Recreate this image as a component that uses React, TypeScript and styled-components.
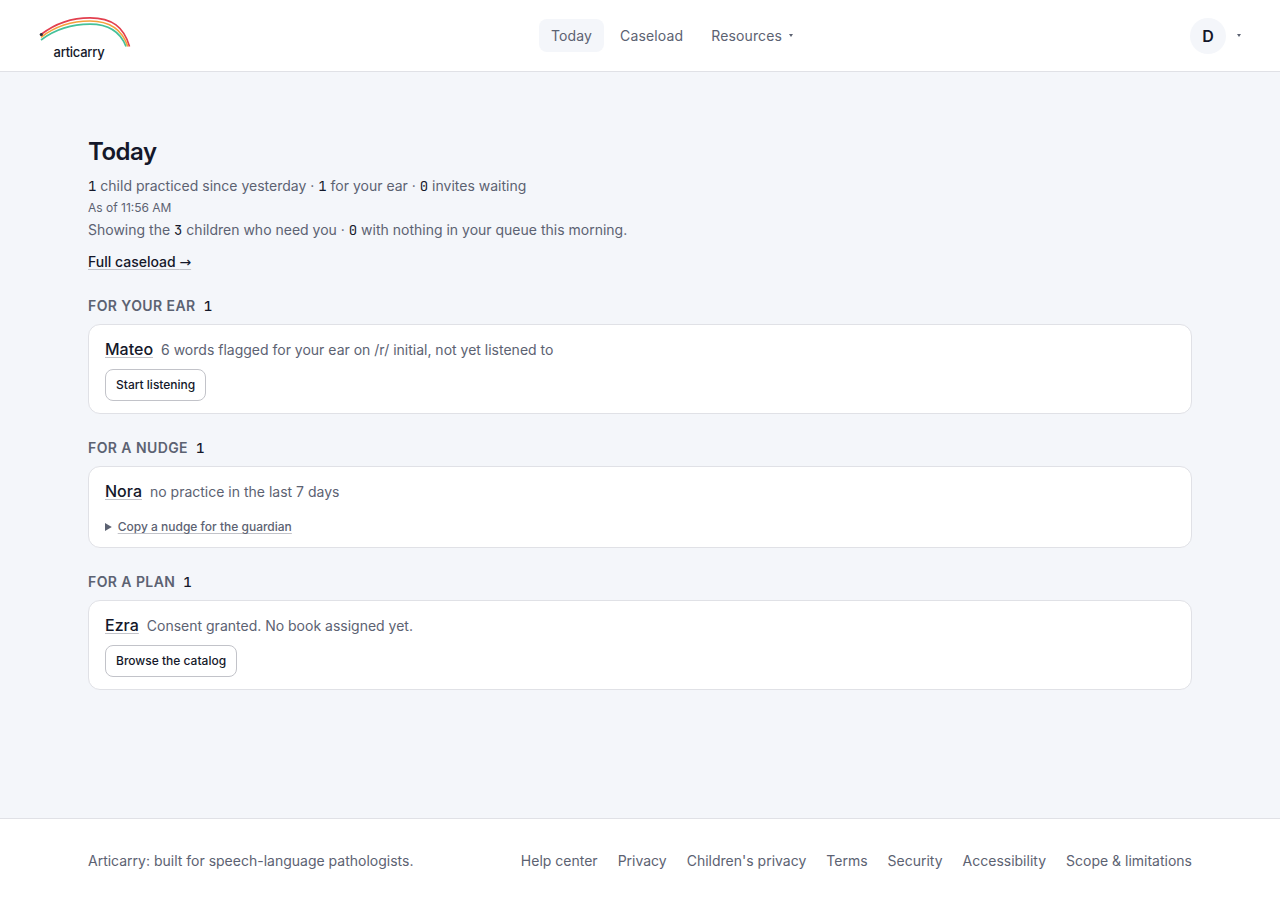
import React from "react";
import styled, { createGlobalStyle } from "styled-components";

const ink = "#14182a";
const muted = "#5c6272";
const line = "#e0e1e6";
const strongLine = "#c2c3c9";
const canvas = "#f4f6fa";

const GlobalStyle = createGlobalStyle`
  *, *::before, *::after { box-sizing: border-box; }
  body {
    margin: 0;
    background: ${canvas};
    color: ${ink};
    font-family: Inter, "Liberation Sans", sans-serif;
    font-size: 14px;
    line-height: 20px;
  }
  h1, h2, p, ul { margin: 0; padding: 0; }
  ul { list-style: none; }
  a { color: inherit; text-decoration: none; }
  button { font: inherit; color: inherit; cursor: pointer; }
`;

const Page = styled.div`
  display: flex;
  flex-direction: column;
  min-height: 100vh;
`;

const Header = styled.header`
  display: flex;
  align-items: center;
  justify-content: space-between;
  min-height: 72px;
  padding: 0 32px;
  background: #fff;
  border-bottom: 1px solid ${line};
`;

const LogoLink = styled.a`
  display: flex;
  width: 126px;
`;

const Nav = styled.nav`
  display: flex;
  gap: 4px;
`;

const navItem = `
  display: flex;
  align-items: center;
  gap: 7px;
  padding: 6px 12px;
  border: 0;
  border-radius: 8px;
  color: ${muted};
  line-height: 21px;
  letter-spacing: 0.01em;
`;

const NavLink = styled.a<{ $active?: boolean }>`
  ${navItem}
  background: ${(p) => (p.$active ? canvas : "transparent")};
`;

const NavButton = styled.button`
  ${navItem}
  background: transparent;
`;

const Caret = styled.span`
  border: 2px solid transparent;
  border-top: 3px solid ${muted};
  border-bottom: 0;
`;

const AccountButton = styled.button`
  display: flex;
  align-items: center;
  gap: 11px;
  padding: 0 7px 0 4px;
  border: 0;
  background: transparent;
`;

const Avatar = styled.span`
  display: grid;
  place-items: center;
  width: 36px;
  height: 36px;
  border-radius: 50%;
  background: ${canvas};
  font-size: 16px;
  font-weight: 600;
`;

const Main = styled.main`
  flex: 1;
  width: 100%;
  max-width: 1200px;
  margin: 0 auto;
  padding: 64px 48px 128px;
`;

const Intro = styled.div`
  display: flex;
  flex-direction: column;
  align-items: flex-start;
  gap: 4px;
  color: ${muted};
`;

const Title = styled.h1`
  margin-bottom: 4px;
  color: ${ink};
  font-size: 24px;
  font-weight: 600;
  line-height: 32px;
  letter-spacing: -0.02em;
`;

const Timestamp = styled.p`
  font-size: 12px;
  line-height: 16px;
`;

const Count = styled.span`
  color: ${ink};
  font-family: "JetBrains Mono", "DejaVu Sans Mono", monospace;
  font-weight: 400;
  line-height: 16px;
`;

const SectionCount = styled(Count)`
  font-weight: 500;
`;

const underline = `
  color: ${ink};
  font-weight: 500;
  text-decoration: underline;
  text-decoration-color: ${strongLine};
  text-decoration-thickness: 1px;
  text-decoration-skip-ink: none;
  text-underline-offset: 2px;
`;

const CaseloadLink = styled.a`
  ${underline}
  margin-top: 8px;
`;

const Arrow = styled.span`
  font-family: "DejaVu Sans", sans-serif;
  font-weight: 400;
  line-height: 16px;
`;

const Section = styled.section`
  display: flex;
  flex-direction: column;
  gap: 8px;
  margin-top: 24px;
`;

const SectionTitle = styled.h2`
  display: flex;
  align-items: center;
  gap: 8px;
  color: ${muted};
  font-size: 14px;
  font-weight: 600;
  line-height: 20px;
  letter-spacing: 0.03em;
  text-transform: uppercase;
`;

const Card = styled.article`
  display: flex;
  flex-direction: column;
  align-items: flex-start;
  gap: 8px;
  padding: 12px 16px;
  border: 1px solid ${line};
  border-radius: 12px;
  background: #fff;
`;

const CardRow = styled.div`
  display: flex;
  align-items: baseline;
  gap: 8px;
  color: ${muted};
`;

const ChildLink = styled.a`
  ${underline}
  font-size: 16px;
  line-height: 24px;
`;

const CardButton = styled.button`
  height: 32px;
  padding: 0 10px;
  border: 1px solid ${strongLine};
  border-radius: 8px;
  background: #fff;
  font-size: 12px;
  font-weight: 500;
`;

const Nudge = styled.details`
  margin-top: 8px;
  color: ${muted};
  font-size: 12px;
  line-height: 16px;
`;

const NudgeSummary = styled.summary`
  ${underline}
  color: ${muted};
  cursor: pointer;
`;

const Footer = styled.footer`
  background: #fff;
  border-top: 1px solid ${line};
  color: ${muted};
`;

const FooterInner = styled.div`
  display: flex;
  flex-wrap: wrap;
  justify-content: space-between;
  gap: 12px 20px;
  max-width: 1200px;
  margin: 0 auto;
  padding: 32px 48px;
`;

const FooterLinks = styled.ul`
  display: flex;
  flex-wrap: wrap;
  gap: 8px 20px;
`;

const footerLinks = [
  "Help center",
  "Privacy",
  "Children's privacy",
  "Terms",
  "Security",
  "Accessibility",
  "Scope & limitations",
];

function Logo() {
  return (
    <svg width="108" height="48" viewBox="32 12 108 48" fill="none" role="img" aria-label="articarry">
      <path d="M41 34.500C57 22 73 17.800 90 17.800C112 17.800 124 27 129.500 46.500" stroke="#e2404f" strokeWidth="1.700" />
      <path d="M41 37.200C57 25 73 21 90 21C110 21 122 29 127.800 46.500" stroke="#f5a13c" strokeWidth="1.700" />
      <path d="M41 40C57 28 73 24.200 90 24.200C108 24.200 120 31 126 46.500" stroke="#45c19a" strokeWidth="1.700" />
      <circle cx="41.300" cy="34.500" r="1.600" fill="#2b2a3c" />
      <text x="79" y="57" textAnchor="middle" fill={ink} fontSize="13" fontWeight="500" letterSpacing="-0.02em" fontFamily="Inter, sans-serif">
        articarry
      </text>
    </svg>
  );
}

function Group({ title, count, name, note, children }: {
  title: string;
  count: number;
  name: string;
  note: string;
  children: React.ReactNode;
}) {
  return (
    <Section>
      <SectionTitle>
        {title} <SectionCount>{count}</SectionCount>
      </SectionTitle>
      <Card>
        <CardRow>
          <ChildLink href="#">{name}</ChildLink>
          <p>{note}</p>
        </CardRow>
        {children}
      </Card>
    </Section>
  );
}

export default function App() {
  return (
    <Page>
      <GlobalStyle />
      <Header>
        <LogoLink href="#"><Logo /></LogoLink>
        <Nav aria-label="Main">
          <NavLink href="#" $active aria-current="page">Today</NavLink>
          <NavLink href="#">Caseload</NavLink>
          <NavButton type="button">Resources <Caret /></NavButton>
        </Nav>
        <AccountButton type="button" aria-label="Account menu">
          <Avatar>D</Avatar>
          <Caret />
        </AccountButton>
      </Header>
      <Main>
        <Intro>
          <Title>Today</Title>
          <p>
            <Count>1</Count> child practiced since yesterday · <Count>1</Count> for your ear ·{" "}
            <Count>0</Count> invites waiting
          </p>
          <Timestamp>As of 11:56 AM</Timestamp>
          <p>
            Showing the <Count>3</Count> children who need you · <Count>0</Count> with nothing in
            your queue this morning.
          </p>
          <CaseloadLink href="#">Full caseload <Arrow>→</Arrow></CaseloadLink>
        </Intro>
        <Group title="For your ear" count={1} name="Mateo" note="6 words flagged for your ear on /r/ initial, not yet listened to">
          <CardButton type="button">Start listening</CardButton>
        </Group>
        <Group title="For a nudge" count={1} name="Nora" note="no practice in the last 7 days">
          <Nudge>
            <NudgeSummary>Copy a nudge for the guardian</NudgeSummary>
          </Nudge>
        </Group>
        <Group title="For a plan" count={1} name="Ezra" note="Consent granted. No book assigned yet.">
          <CardButton type="button">Browse the catalog</CardButton>
        </Group>
      </Main>
      <Footer>
        <FooterInner>
          <p>Articarry: built for speech-language pathologists.</p>
          <FooterLinks>
            {footerLinks.map((label) => (
              <li key={label}><a href="#">{label}</a></li>
            ))}
          </FooterLinks>
        </FooterInner>
      </Footer>
    </Page>
  );
}
